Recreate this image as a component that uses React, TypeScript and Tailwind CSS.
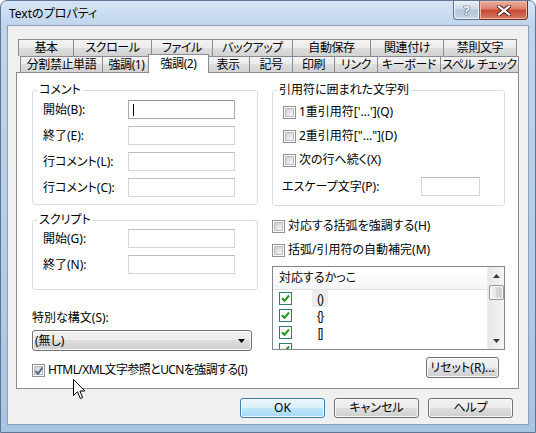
import React from 'react'

const row1 = [
  { label: '基本', w: 'w-[56px]' },
  { label: 'スクロール', w: 'w-[79px]' },
  { label: 'ファイル', w: 'w-[62px]' },
  { label: 'バックアップ', w: 'w-[81px]' },
  { label: '自動保存', w: 'w-[79px]' },
  { label: '関連付け', w: 'w-[74px]' },
  { label: '禁則文字', w: 'w-[74px]' },
]

const row2 = [
  { label: '分割禁止単語', w: 'w-[83px]' },
  { label: '強調(1)', w: 'w-[49px]' },
  { label: '強調(2)', w: 'w-[61px]', selected: true },
  { label: '表示', w: 'w-[44px]' },
  { label: '記号', w: 'w-[44px]' },
  { label: '印刷', w: 'w-[43px]' },
  { label: 'リンク', w: 'w-[44px]' },
  { label: 'キーボード', w: 'w-[64px]' },
  { label: 'スペル チェック', w: 'w-[79px]' },
]

const tabBg = 'bg-[linear-gradient(#f3f3f3,#ebebeb_50%,#dedede_50%,#d2d2d2)]'
const btnBg = 'bg-[linear-gradient(#f2f2f2,#ebebeb_50%,#dddddd_50%,#cfcfcf)]'

function Checkbox({ checked = false }: { checked?: boolean }) {
  return (
    <span className="relative flex h-[13px] w-[13px] shrink-0 items-center justify-center border border-[#8e8f8f] bg-white">
      <span className="h-[9px] w-[9px] border border-[#b7bbc1] bg-[linear-gradient(135deg,#cdd0d5,#f5f5f5)]" />
      {checked && (
        <svg className="absolute left-[1px] top-[1px]" width="10" height="10" viewBox="0 0 10 10">
          <path d="M1.5 5 L4 7.8 L8.5 1.5" stroke="#4b5f86" strokeWidth="1.8" fill="none" />
        </svg>
      )}
    </span>
  )
}

function ListCheck() {
  return (
    <span className="flex h-[13px] w-[13px] shrink-0 items-center justify-center border border-[#2a7b7b] bg-white">
      <svg width="9" height="9" viewBox="0 0 9 9">
        <path d="M1 4.3 L3.5 6.8 L8 1.5" stroke="#1e961e" strokeWidth="2" fill="none" />
      </svg>
    </span>
  )
}

function CheckRow({ label, checked, className = '', textClass = '' }: { label: string; checked?: boolean; className?: string; textClass?: string }) {
  return (
    <div className={`flex h-[16px] items-center gap-[3px] ${className}`}>
      <Checkbox checked={checked} />
      <span className={textClass}>{label}</span>
    </div>
  )
}

function TextBox({ w, focused }: { w: string; focused?: boolean }) {
  return (
    <div
      className={`flex h-[19px] items-center border bg-white ${w} ${
        focused ? 'border-[#a4abb4] border-t-[#8d949e]' : 'border-[#d3d7dc] border-t-[#b9bdc3]'
      }`}
    >
      {focused && <span className="ml-[4px] h-[12px] w-px bg-black" />}
    </div>
  )
}

function WinButton({ children, className = '', primary }: { children: React.ReactNode; className?: string; primary?: boolean }) {
  return (
    <div
      className={`flex items-center justify-center rounded-[3px] border shadow-[inset_0_0_0_1px_#fbfbfb] ${
        primary
          ? 'border-[#3c7fb1] bg-[linear-gradient(#eaf6fd,#d9f0fc_50%,#bee6fd_50%,#a7d9f5)]'
          : `border-[#707070] ${btnBg}`
      } ${className}`}
    >
      {children}
    </div>
  )
}

function FormRow({ label, focused }: { label: string; focused?: boolean }) {
  return (
    <div className="flex h-[19px] items-center">
      <span className="w-[85px]">{label}</span>
      <TextBox w="w-[107px]" focused={focused} />
    </div>
  )
}

export default function App() {
  return (
    <div className="relative h-[433px] w-[536px] overflow-hidden whitespace-nowrap rounded-t-[7px] border border-[#5f7694] bg-[linear-gradient(#d6e5f5,#c0d5ec_24px,#b4cce7_60%,#a9c4e2)] px-[6px] pb-[7px] font-['Noto_Sans','Noto_Sans_CJK_JP',sans-serif] text-[12px] leading-[16px] text-black [font-feature-settings:'palt']">
      {/* title bar */}
      <div className="flex h-[24px] items-center pl-[2px] pt-[2px]">
        <span>Textのプロパティ</span>
      </div>
      <div className="absolute right-[7px] top-0 flex">
        <div className="flex h-[19px] w-[27px] items-center justify-center rounded-bl-[4px] border border-t-0 border-[#5f7088] bg-[linear-gradient(#e6edf6,#cfdae8_45%,#b5c6db_50%,#c6d5e7)] shadow-[inset_0_0_0_1px_#eef3f9]">
          <span className="text-[13px] font-bold leading-none text-white [text-shadow:0_0_1px_#33465f,0_0_1px_#33465f,0_0_1px_#33465f]">?</span>
        </div>
        <div className="flex h-[19px] w-[48px] items-center justify-center rounded-br-[4px] border border-l-0 border-t-0 border-[#6b2d22] bg-[linear-gradient(#eab0a2,#dc806b_45%,#c54a31_50%,#d67a60)] shadow-[inset_0_0_0_1px_#efb9ab]">
          <svg width="14" height="11" viewBox="0 0 14 11">
            <path d="M2 1.5 L12 9.5 M12 1.5 L2 9.5" stroke="#4a1c14" strokeWidth="4" strokeLinecap="square" />
            <path d="M2 1.5 L12 9.5 M12 1.5 L2 9.5" stroke="#ffffff" strokeWidth="2.2" strokeLinecap="square" />
          </svg>
        </div>
      </div>

      {/* client area */}
      <div className="flex h-[400px] flex-col border border-[#8aa0ba] bg-[#f0f0f0]">
        <div className="ml-[8px] mt-[13px] w-[503px]">
          <div className="flex h-[17px] pl-[2px]">
            {row1.map((t, i) => (
              <div
                key={t.label}
                className={`flex h-[17px] items-center justify-center border border-b-0 border-[#898c95] tracking-[-0.4px] ${tabBg} ${t.w} ${
                  i > 0 ? '-ml-px' : ''
                }`}
              >
                {t.label}
              </div>
            ))}
          </div>
          <div className="flex h-[16px] items-start pl-[4px]">
            {row2.map((t, i) =>
              t.selected ? (
                <div
                  key={t.label}
                  className={`relative z-10 -mb-px -ml-[3px] -mr-[2px] -mt-[2px] flex h-[19px] justify-center border border-b-0 border-[#898c95] bg-white pt-[1px] tracking-[-0.4px] ${t.w}`}
                >
                  {t.label}
                </div>
              ) : (
                <div
                  key={t.label}
                  className={`flex h-[16px] items-center justify-center border border-b-0 border-[#898c95] tracking-[-0.4px] ${tabBg} ${t.w} ${
                    i > 0 ? '-ml-px' : ''
                  }`}
                >
                  {t.label}
                </div>
              )
            )}
          </div>

          {/* tab page */}
          <div className="flex h-[317px] gap-[14px] border border-[#898c95] bg-white pl-[15px] pr-[13px] pt-[9px]">
            {/* left column */}
            <div className="flex w-[226px] flex-col">
              <fieldset className="h-[123px] rounded-[3px] border border-[#d5dfe5]">
                <legend className="ml-[4px] px-[2px] leading-[16px]">コメント</legend>
                <div className="flex flex-col gap-[7px] pl-[10px] pt-[2px]">
                  <FormRow label="開始(B):" focused />
                  <FormRow label="終了(E):" />
                  <FormRow label="行コメント(L):" />
                  <FormRow label="行コメント(C):" />
                </div>
              </fieldset>
              <fieldset className="mt-[7px] h-[78px] rounded-[3px] border border-[#d5dfe5]">
                <legend className="ml-[4px] px-[2px] leading-[16px]">スクリプト</legend>
                <div className="flex flex-col gap-[7px] pl-[10px] pt-[1px]">
                  <FormRow label="開始(G):" />
                  <FormRow label="終了(N):" />
                </div>
              </fieldset>
              <div className="mt-[20px] h-[16px]">特別な構文(S):</div>
              <div className={`mt-[4px] flex h-[21px] w-[220px] items-center justify-between rounded-[3px] border border-[#707070] pl-[2px] pr-[6px] shadow-[inset_0_0_0_1px_#fbfbfb] ${btnBg}`}>
                <span>(無し)</span>
                <svg width="7" height="4" viewBox="0 0 7 4">
                  <path d="M0 0 H7 L3.5 4 Z" fill="#000" />
                </svg>
              </div>
              <CheckRow className="mt-[11px]" textClass="tracking-[-0.6px]" checked label="HTML/XML文字参照とUCNを強調する(I)" />
            </div>

            {/* right column */}
            <div className="flex w-[233px] flex-col">
              <fieldset className="h-[124px] rounded-[3px] border border-[#d5dfe5]">
                <legend className="ml-[4px] px-[2px] leading-[16px]">引用符に囲まれた文字列</legend>
                <div className="flex flex-col gap-[8px] pl-[10px] pt-[6px]">
                  <CheckRow label="1重引用符['…'](Q)" />
                  <CheckRow label={'2重引用符["…"](D)'} />
                  <CheckRow label="次の行へ続く(X)" />
                </div>
                <div className="mt-[9px] flex h-[19px] items-center pl-[9px]">
                  <span className="w-[139px]">エスケープ文字(P):</span>
                  <TextBox w="w-[59px]" />
                </div>
              </fieldset>
              <CheckRow className="mt-[12px]" label="対応する括弧を強調する(H)" />
              <CheckRow className="mt-[8px]" label="括弧/引用符の自動補完(M)" />

              <div className="mt-[8px] flex h-[84px] overflow-hidden border border-[#828790] bg-white">
                <div className="flex flex-1 flex-col">
                  <div className="flex h-[23px] shrink-0 items-center border-b border-[#e2e3e5] bg-[linear-gradient(#ffffff,#f4f5f7)] pl-[6px]">
                    対応するかっこ
                  </div>
                  {['()', '{}', '[]', ''].map((s, i) => (
                    <div key={i} className="flex h-[17px] shrink-0 items-center pl-[6px]">
                      <ListCheck />
                      <span
                        className={`ml-[20px] flex h-[17px] w-[16px] items-center justify-center font-['Liberation_Sans',sans-serif] tracking-[-1px] ${
                          i === 0 ? 'bg-[#ececec]' : ''
                        }`}
                      >
                        {s}
                      </span>
                    </div>
                  ))}
                </div>
                <div className="flex w-[17px] flex-col items-center border-l border-[#ededed] bg-[linear-gradient(90deg,#e6e6e6,#f4f4f4)]">
                  <div className="flex h-[17px] w-full items-center justify-center">
                    <svg width="7" height="4" viewBox="0 0 7 4">
                      <path d="M0 4 H7 L3.5 0 Z" fill="#3a3a3a" />
                    </svg>
                  </div>
                  <div className="mt-px h-[15px] w-[15px] rounded-[2px] border border-[#979797] bg-[linear-gradient(90deg,#f4f4f4,#e6e6e6_50%,#d9d9d9_50%,#cfcfcf)] shadow-[inset_0_0_0_1px_#fbfbfb]" />
                  <div className="flex-1" />
                  <div className="flex h-[17px] w-full items-center justify-center">
                    <svg width="7" height="4" viewBox="0 0 7 4">
                      <path d="M0 0 H7 L3.5 4 Z" fill="#3a3a3a" />
                    </svg>
                  </div>
                </div>
              </div>

              <WinButton className="mr-[6px] mt-[7px] h-[21px] w-[73px] self-end">リセット(R)...</WinButton>
            </div>
          </div>
        </div>

        {/* dialog buttons */}
        <div className="mt-[9px] flex justify-end gap-[9px] pr-[15px]">
          <WinButton primary className="h-[20px] w-[85px]">
            OK
          </WinButton>
          <WinButton className="h-[20px] w-[85px]">キャンセル</WinButton>
          <WinButton className="h-[20px] w-[85px]">ヘルプ</WinButton>
        </div>
      </div>

      {/* mouse pointer */}
      <svg className="absolute left-[72px] top-[378px]" width="13" height="21" viewBox="0 0 13 21">
        <path d="M0.5 0.5 L0.5 16.5 L4.5 12.8 L7.3 19.5 L9.6 18.5 L6.9 12 L11.8 12 Z" fill="#fff" stroke="#000" strokeWidth="1" />
      </svg>
    </div>
  )
}
